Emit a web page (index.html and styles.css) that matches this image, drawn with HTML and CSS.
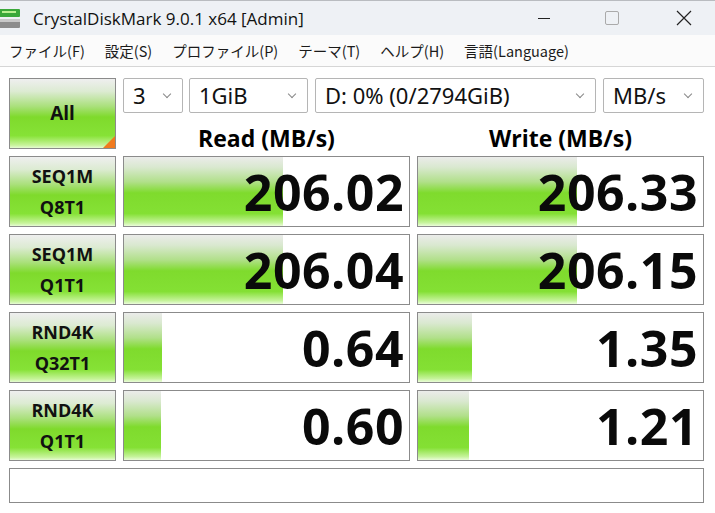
FILE: index.html
```html
<!DOCTYPE html>
<html>
	<head>
		<meta charset="UTF-8">
		<title>CrystalDiskMark</title>
		<link rel="stylesheet" href="styles.css">
	</head>
	<body>
		<div class="window">
			<div class="titlebar">
				<svg class="appicon" width="26" height="26" viewBox="0 0 26 26">
					<rect x="-4" y="4" width="24" height="8" rx="1" fill="#3aa83a"/>
					<rect x="2" y="6" width="14" height="2" fill="#b8f090"/>
					<rect x="-4" y="14" width="24" height="9" rx="1" fill="#8c8c8c"/>
					<rect x="-4" y="14" width="24" height="3" fill="#c8c8c8"/>
				</svg>
				<span class="title">CrystalDiskMark 9.0.1 x64 [Admin]</span>
				<div class="controls">
					<span class="ctl"><svg width="16" height="16" viewBox="0 0 16 16"><path d="M2 8.5h12" stroke="#222" stroke-width="1"/></svg></span>
					<span class="ctl"><svg width="16" height="16" viewBox="0 0 16 16"><rect x="1.5" y="1.5" width="13" height="13" rx="1.5" fill="none" stroke="#aaa" stroke-width="1"/></svg></span>
					<span class="ctl"><svg width="16" height="16" viewBox="0 0 16 16"><path d="M1 1L15 15M15 1L1 15" stroke="#222" stroke-width="1.2"/></svg></span>
				</div>
			</div>
			<div class="menubar">
				<span>ファイル(F)</span>
				<span>設定(S)</span>
				<span>プロファイル(P)</span>
				<span>テーマ(T)</span>
				<span>ヘルプ(H)</span>
				<span>言語(Language)</span>
			</div>
			<div class="main">
				<div class="grid">
					<div class="btn allbtn">All<span class="corner"></span></div>
					<div class="topright">
						<div class="selects">
							<div class="select s-count">3<span class="chev"></span></div>
							<div class="select s-size">1GiB<span class="chev"></span></div>
							<div class="select s-drive">D: 0% (0/2794GiB)<span class="chev"></span></div>
							<div class="select s-unit">MB/s<span class="chev"></span></div>
						</div>
						<div class="heads">
							<div class="head">Read (MB/s)</div>
							<div class="head">Write (MB/s)</div>
						</div>
					</div>

					<div class="btn">SEQ1M<br>Q8T1</div>
					<div class="cell"><div class="bar" style="width:159px"></div><span class="val">206.02</span></div>
					<div class="cell"><div class="bar" style="width:159px"></div><span class="val">206.33</span></div>

					<div class="btn">SEQ1M<br>Q1T1</div>
					<div class="cell"><div class="bar" style="width:159px"></div><span class="val">206.04</span></div>
					<div class="cell"><div class="bar" style="width:159px"></div><span class="val">206.15</span></div>

					<div class="btn">RND4K<br>Q32T1</div>
					<div class="cell"><div class="bar" style="width:38px"></div><span class="val">0.64</span></div>
					<div class="cell"><div class="bar" style="width:54px"></div><span class="val">1.35</span></div>

					<div class="btn">RND4K<br>Q1T1</div>
					<div class="cell"><div class="bar" style="width:37px"></div><span class="val">0.60</span></div>
					<div class="cell"><div class="bar" style="width:51px"></div><span class="val">1.21</span></div>
				</div>
				<div class="comment"></div>
			</div>
		</div>
	</body>
</html>
```

FILE: styles.css
```css
* {
	margin: 0;
	padding: 0;
	box-sizing: border-box;
}
body {
	width: 715px;
	height: 513px;
	overflow: hidden;
	background: #ffffff;
	font-family: "Open Sans", "Noto Sans CJK JP", sans-serif;
	color: #000;
}
.window {
	height: 513px;
	display: flex;
	flex-direction: column;
	border-top: 1px solid #b9bcc0;
}
.titlebar {
	height: 34px;
	background: #eef1f5;
	display: flex;
	align-items: center;
	overflow: hidden;
}
.appicon {
	flex: none;
}
.title {
	font-size: 17px;
	margin-left: 7px;
	color: #111;
}
.controls {
	margin-left: auto;
	display: flex;
	margin-right: 23px;
}
.ctl {
	width: 68px;
	display: flex;
	justify-content: center;
	align-items: center;
}
.ctl:last-child {
	width: 46px;
	justify-content: flex-end;
}
.menubar {
	height: 32px;
	background: #fbfbfb;
	border-bottom: 1px solid #d6d6d6;
	display: flex;
	align-items: center;
	padding-left: 9px;
	gap: 20px;
	font-family: "Noto Sans CJK JP", sans-serif;
	font-size: 14.5px;
	color: #1a1a1a;
}
.main {
	padding: 11px 11px 0 9px;
}
.grid {
	display: grid;
	grid-template-columns: 107px 287px 287px;
	grid-auto-rows: 71px;
	column-gap: 7px;
	row-gap: 7px;
}
.btn {
	position: relative;
	border: 1px solid #8b8b8b;
	background: linear-gradient(to bottom, #efefef 0%, #dcebd2 18%, #a9e07a 40%, #7fda2c 55%, #86e236 82%, #c8f49c 96%, #e6fbd4 100%);
	display: flex;
	align-items: center;
	justify-content: center;
	text-align: center;
	font-weight: bold;
	font-size: 18px;
	line-height: 31px;
	color: #111;
}
.allbtn {
	font-size: 19px;
}
.corner {
	position: absolute;
	right: 0;
	bottom: 0;
	width: 0;
	height: 0;
	border-left: 12px solid transparent;
	border-bottom: 12px solid #f07a1e;
}
.topright {
	grid-column: 2 / 4;
	display: flex;
	flex-direction: column;
}
.selects {
	display: flex;
	height: 35px;
}
.select {
	position: relative;
	height: 35px;
	border: 1px solid #b5b5b5;
	border-radius: 2px;
	background: #fff;
	font-family: "Noto Sans", sans-serif;
	font-size: 22px;
	line-height: 33px;
	padding-left: 9px;
	color: #111;
	margin-right: 7px;
}
.s-count { width: 60px; margin-right: 6px; }
.s-size { width: 119px; }
.s-drive { width: 281px; }
.s-unit { width: 101px; margin-right: 0; }
.chev {
	position: absolute;
	right: 12px;
	top: 12px;
	width: 6px;
	height: 6px;
	border-right: 1px solid #888;
	border-bottom: 1px solid #888;
	transform: rotate(45deg);
}
.heads {
	display: flex;
	flex: 1;
	gap: 7px;
}
.head {
	width: 287px;
	text-align: center;
	font-weight: bold;
	font-size: 23px;
	line-height: 30px;
	padding-top: 10px;
}
.cell {
	position: relative;
	border: 1px solid #8b8b8b;
	background: #fff;
	display: flex;
	align-items: center;
	justify-content: flex-end;
}
.bar {
	position: absolute;
	left: 0;
	top: 0;
	bottom: 0;
	background: linear-gradient(to bottom, #ebecea 0%, #d9e8cf 15%, #b1e08a 36%, #7fdb2d 52%, #84e034 82%, #c5f39a 95%, #eafcd9 100%);
}
.val {
	position: relative;
	font-weight: bold;
	font-size: 50px;
	line-height: 68px;
	padding-right: 5px;
	padding-top: 1px;
	letter-spacing: 0.5px;
	color: #0a0a0a;
}
.comment {
	margin-top: 7px;
	height: 35px;
	border: 1px solid #8b8b8b;
	background: #fff;
}
```
